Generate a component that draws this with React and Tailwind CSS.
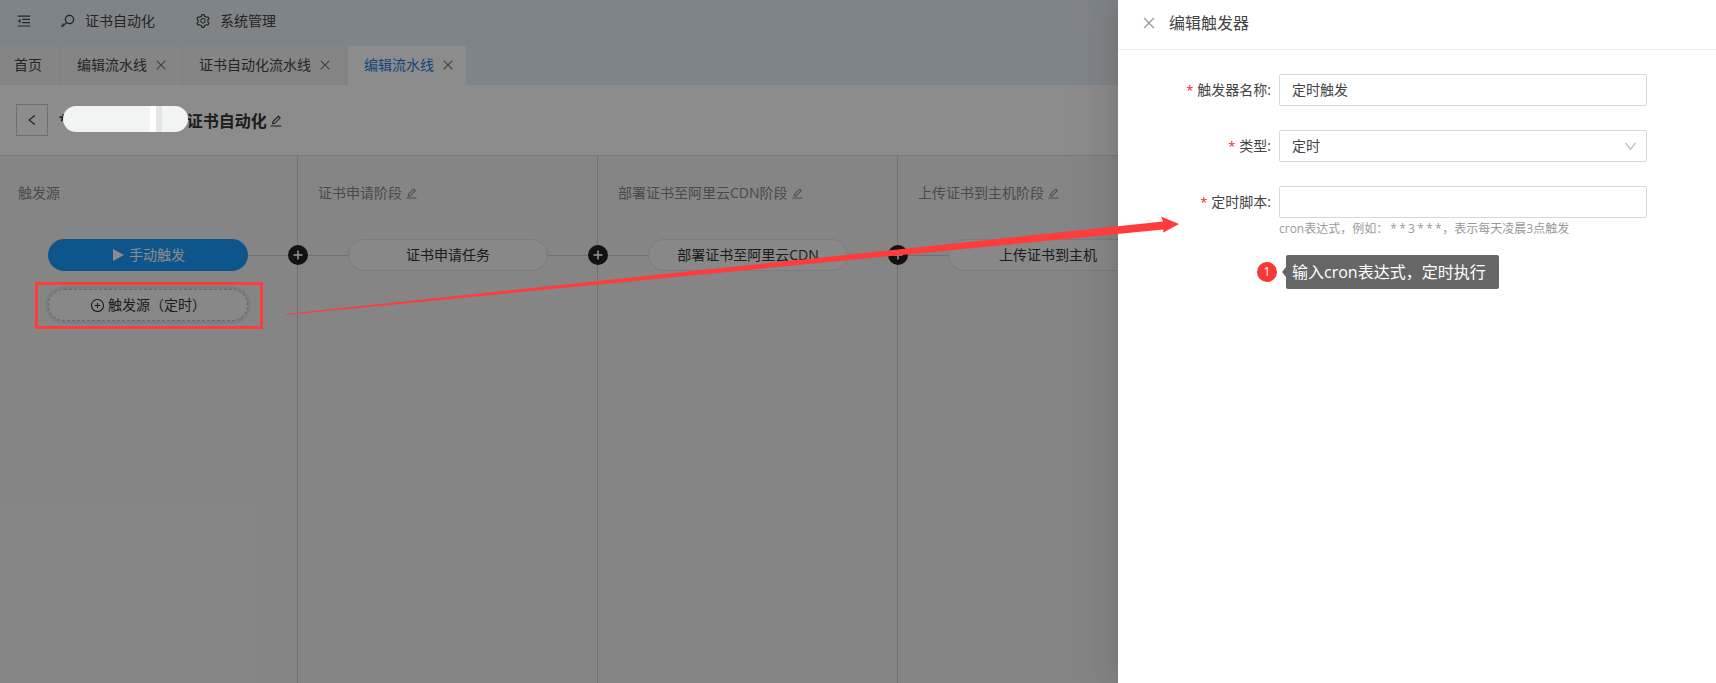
import {
  AiOutlineClose,
  AiOutlineDown,
  AiOutlineEdit,
  AiOutlineKey,
  AiOutlineLeft,
  AiOutlineMenuFold,
  AiOutlinePlus,
  AiOutlinePlusCircle,
  AiOutlineSetting
} from 'react-icons/ai';

const tabs = [
  { label: '首页', width: 'w-[58px] pl-[14px]' },
  { label: '编辑流水线', width: 'w-[118px] pl-[15px]', closable: true },
  { label: '证书自动化流水线', width: 'w-[160px] pl-[15px]', closable: true },
  { label: '编辑流水线', width: 'w-[118px] pl-[16px]', closable: true, active: true }
];

const stages = [
  { title: '证书申请阶段', task: '证书申请任务' },
  { title: '部署证书至阿里云CDN阶段', task: '部署证书至阿里云CDN' },
  { title: '上传证书到主机阶段', task: '上传证书到主机' }
];

function AddButton() {
  return (
    <span className="absolute -right-[11px] top-[6px] z-10 flex h-5 w-5 items-center justify-center rounded-full bg-[#222] text-white">
      <AiOutlinePlus size={12} strokeWidth={60} />
    </span>
  );
}

function Pill({ children }) {
  return (
    <div className="flex h-8 w-[200px] shrink-0 items-center justify-center rounded-full border border-[#e0e0e0] bg-[#f8f8f8] text-sm text-[#333]">
      {children}
    </div>
  );
}

function Header() {
  return (
    <header className="flex h-[46px] items-center bg-[#e7f0f8] pb-[5px] text-sm text-[#444]">
      <AiOutlineMenuFold size={16} className="ml-4" />
      <AiOutlineKey size={16} className="ml-[28px]" />
      <span className="ml-[9px]">证书自动化</span>
      <AiOutlineSetting size={16} className="ml-[40px]" />
      <span className="ml-[9px]">系统管理</span>
    </header>
  );
}

function TabBar() {
  return (
    <nav className="flex h-[39px] gap-1 bg-[#e7f0f8] text-sm">
      {tabs.map((tab, index) => (
        <div
          key={index}
          className={`flex ${tab.width} items-center pb-[2px] ${
            tab.active ? 'bg-white text-[#1c7fe0]' : 'bg-[#f3f3f3] text-[#444]'
          }`}
        >
          {tab.label}
          {tab.closable ? (
            <AiOutlineClose size={14} className="ml-[7px] text-[#777]" />
          ) : null}
        </div>
      ))}
    </nav>
  );
}

function TitleRow() {
  return (
    <div className="flex h-[71px] items-center border-b border-[#d9d9d9] bg-white pl-4">
      <button className="flex h-8 w-8 items-center justify-center border border-[#ccc] text-[#333]">
        <AiOutlineLeft size={14} />
      </button>
      <span className="ml-[11px] text-base font-bold text-[#333]">*</span>
      <span className="w-[119px] shrink-0" />
      <span className="mt-[2px] text-base font-bold text-[#333]">证书自动化</span>
      <AiOutlineEdit size={14} className="ml-[2px] mt-[2px] text-[#333]" />
    </div>
  );
}

function Pipeline() {
  return (
    <div className="flex flex-1 bg-[#f3f3f3]">
      <section className="w-[298px] shrink-0 border-r border-[#ccc] pt-[26px]">
        <h3 className="pl-[18px] text-sm leading-[22px] text-[#888]">触发源</h3>
        <div className="relative mt-[35px] flex items-center">
          <div className="ml-[48px] flex h-8 w-[200px] shrink-0 items-center justify-center gap-[5px] rounded-full bg-[#1a9bff] pl-[2px] text-sm text-white">
            <svg width="11" height="12" viewBox="0 0 11 12">
              <polygon points="0,0 11,6 0,12" fill="currentColor" />
            </svg>
            手动触发
          </div>
          <div className="h-px flex-1 bg-[#ccc]" />
          <AddButton />
        </div>
        <div className="ml-[48px] mt-[18px] flex h-8 w-[200px] items-center justify-center gap-[3px] rounded-full border border-dashed border-[#bbb] bg-[#f8f8f8] text-sm text-[#333] shadow-[0_0_0_3px_#dfe6ee]">
          <AiOutlinePlusCircle size={15} />
          触发源（定时）
        </div>
      </section>

      {stages.map((stage) => (
        <section key={stage.title} className="w-[300px] shrink-0 border-r border-[#ccc] pt-[26px]">
          <h3 className="flex items-center gap-[3px] pl-[20px] text-sm leading-[22px] text-[#888]">
            {stage.title}
            <AiOutlineEdit size={13} />
          </h3>
          <div className="relative mt-[35px] flex items-center">
            <div className="h-px w-[50px] bg-[#ccc]" />
            <Pill>{stage.task}</Pill>
            <div className="h-px flex-1 bg-[#ccc]" />
            <AddButton />
          </div>
        </section>
      ))}
    </div>
  );
}

function Field({ label, children }) {
  return (
    <div className="flex items-start">
      <label className="flex h-8 w-[153px] shrink-0 items-center justify-end text-[13px] text-[#444]">
        <span className="mr-1 text-[#f5222d]">*</span>
        <span className="text-sm">{label}:</span>
      </label>
      <div className="ml-2 w-[368px]">{children}</div>
    </div>
  );
}

function Drawer() {
  return (
    <aside className="absolute bottom-0 right-0 top-0 z-20 flex w-[598px] flex-col bg-white shadow-[-6px_0_16px_-8px_rgba(0,0,0,0.08),-9px_0_28px_0_rgba(0,0,0,0.05),-12px_0_48px_16px_rgba(0,0,0,0.03)]">
      <div className="flex h-[50px] items-center border-b border-[#eee] pb-1 pl-[23px]">
        <AiOutlineClose size={16} className="text-[#999]" />
        <h2 className="ml-3 text-base text-[#444]">编辑触发器</h2>
      </div>
      <form className="flex flex-col gap-6 pt-6 text-sm text-[#444]">
        <Field label="触发器名称">
          <input
            readOnly
            value="定时触发"
            className="h-8 w-full rounded-[2px] border border-[#d9d9d9] px-3 pb-[2px] outline-none"
          />
        </Field>
        <Field label="类型">
          <div className="flex h-8 items-center justify-between rounded-[2px] border border-[#d9d9d9] pl-3 pr-2">
            定时
            <AiOutlineDown size={15} className="text-[#bbb]" />
          </div>
        </Field>
        <Field label="定时脚本">
          <input readOnly className="h-8 w-full rounded-[2px] border border-[#d9d9d9] px-3 outline-none" />
          <p className="mt-[3px] text-xs text-[#999]">
            cron表达式，例如：
            <span className="ml-[2px] mr-[1px] tracking-[-0.4px]">* * 3 * * *</span>
            ，表示每天凌晨3点触发
          </p>
        </Field>
      </form>
    </aside>
  );
}

// annotations drawn on top of the screenshot
function Annotations() {
  return (
    <>
      <div className="absolute left-[63px] top-[106px] z-30 flex h-[26px] w-[125px] overflow-hidden rounded-[13px] bg-[#f2f3f3]">
        <div className="ml-[87px] h-full w-[6px] bg-white" />
        <div className="h-full w-[6px] bg-[#e4e4e4]" />
      </div>
      <div className="absolute left-[35px] top-[282px] z-30 h-[47px] w-[228px] border-[3px] border-[#ff3b3b]" />
      <svg className="absolute left-0 top-0 z-30" width="1716" height="683">
        <polygon
          points="286,314 1163,221.5 1161,216.5 1179,224 1163,232.7 1163.5,229.5 286,315"
          fill="#ff3b3b"
        />
      </svg>
      <div className="absolute left-[1257px] top-[255px] z-30 flex items-center">
        <span className="flex h-5 w-5 items-center justify-center rounded-full bg-[#f83737] text-xs text-white">
          1
        </span>
        <span className="ml-[5px] h-0 w-0 border-y-[5px] border-r-[4px] border-y-transparent border-r-[#666]" />
        <div className="flex h-[34px] w-[213px] items-center rounded-[2px] bg-[#666] pl-[6px] text-base text-white">
          输入cron表达式，定时执行
        </div>
      </div>
    </>
  );
}

function App() {
  return (
    <div className="relative flex h-[683px] w-[1716px] flex-col overflow-hidden font-['Open_Sans','Noto_Sans_CJK_SC',sans-serif]">
      <Header />
      <TabBar />
      <TitleRow />
      <Pipeline />
      <div className="absolute inset-0 z-10 bg-black/45" />
      <Drawer />
      <Annotations />
    </div>
  );
}

export default App;
